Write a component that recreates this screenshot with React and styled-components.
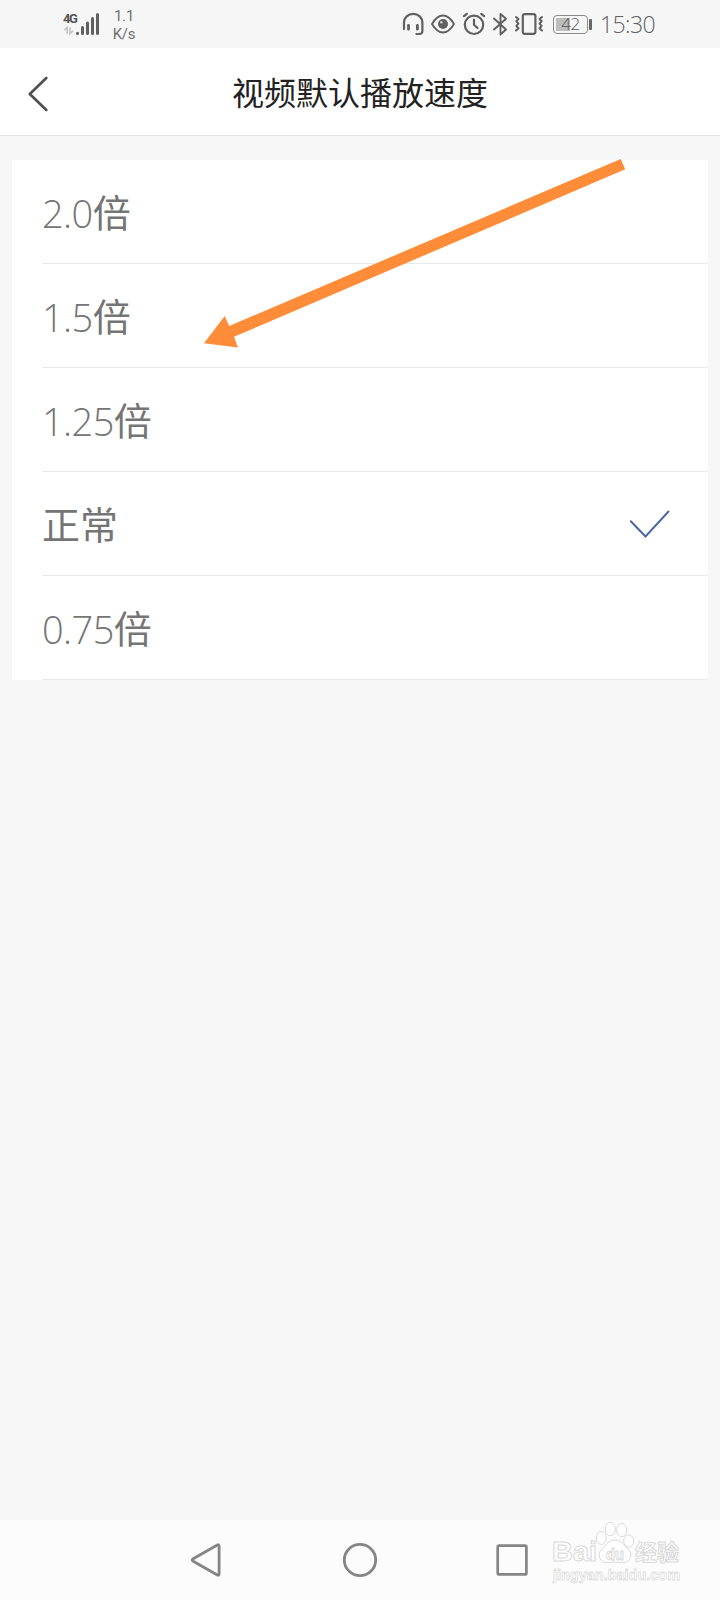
import React from "react";
import styled, { createGlobalStyle } from "styled-components";

const GlobalStyle = createGlobalStyle`
  * { box-sizing: border-box; }
  body { margin: 0; background: #f6f6f6; }
`;

const cjk = `"Noto Sans CJK SC", sans-serif`;

const Screen = styled.div`
  position: relative;
  width: 720px;
  height: 1600px;
  display: flex;
  flex-direction: column;
  background: #f7f7f7;
  overflow: hidden;
  font-family: "Open Sans", ${cjk};
`;

const StatusBar = styled.header`
  height: 48px;
  flex: none;
  display: flex;
  align-items: flex-start;
  padding: 0 65px 0 63px;
  background: #f6f6f6;
`;

const Drawing = styled.svg`
  display: block;
  flex: none;
  overflow: visible;
  margin-left: ${(p) => p.$gap || 0}px;
`;

const NetworkType = styled.div`
  width: 13px;
  padding-top: 11px;
  font: 700 13px/15px "Roboto", sans-serif;
  letter-spacing: -1.5px;
  color: #555;
`;

const NetSpeed = styled.div`
  width: 26px;
  margin-left: 11px;
  padding-top: 7px;
  text-align: center;
  font: 400 15px/18px "Roboto", sans-serif;
  letter-spacing: -0.2px;
  color: #707070;
`;

const StatusIcons = styled.div`
  margin-left: auto;
  display: flex;
`;

const Battery = styled.div`
  width: 35px;
  height: 19px;
  margin: 15px 0 0 10px;
  padding: 2px;
  border: 1.5px solid #8a8a8a;
  border-radius: 4px;
`;

const BatteryLevel = styled.div`
  height: 100%;
  background: linear-gradient(to right, #bdbdbd 48%, transparent 48%);
  font: 300 17px/12px "Open Sans", sans-serif;
  letter-spacing: -0.5px;
  text-align: center;
  color: #555;
`;

const BatteryKnob = styled.div`
  width: 3px;
  height: 11px;
  margin: 19px 0 0 1px;
  border-radius: 1px;
  background: #666;
`;

const Clock = styled.div`
  width: 55px;
  margin-left: 8px;
  font: 300 23px/49px "Open Sans", sans-serif;
  letter-spacing: -0.6px;
  white-space: nowrap;
  color: #606060;
`;

const TitleBar = styled.div`
  height: 88px;
  flex: none;
  display: grid;
  grid-template-columns: 76px 1fr 76px;
  align-items: center;
  background: #fff;
  border-bottom: 1px solid #e3e3e3;
`;

const BackButton = styled.button`
  padding: 4px 0 0 27px;
  border: 0;
  background: none;
`;

const Title = styled.h1`
  margin: 0;
  padding-bottom: 2px;
  text-align: center;
  font: 400 32px/48px ${cjk};
  color: #222;
`;

const SpeedList = styled.ul`
  margin: 24px 12px 0;
  padding: 0 0 0 30px;
  list-style: none;
  background: #fff;
`;

const SpeedRow = styled.li`
  height: 104px;
  display: flex;
  align-items: center;
  justify-content: space-between;
  padding-right: 37px;
  border-bottom: 1px solid #e8e8e8;
`;

const SpeedLabel = styled.span`
  display: flex;
  align-items: center;
  color: #757575;
`;

const Digits = styled.span`
  padding-top: 2px;
  font: 300 38px/56px "Open Sans", sans-serif;
  letter-spacing: -0.6px;
`;

const Unit = styled.span`
  font: 400 38px/54px ${cjk};
  padding-bottom: 2px;
`;

const Spacer = styled.div`
  flex: 1;
`;

const NavBar = styled.nav`
  height: 80px;
  flex: none;
  display: flex;
  align-items: center;
  padding-left: 190px;
  background: #fcfcfc;
`;

const Overlay = styled.svg`
  position: absolute;
  left: ${(p) => p.$left}px;
  top: ${(p) => p.$top}px;
  pointer-events: none;
`;

const speeds = [
  { digits: "2.0", unit: "倍" },
  { digits: "1.5", unit: "倍" },
  { digits: "1.25", unit: "倍" },
  { digits: "", unit: "正常", selected: true },
  { digits: "0.75", unit: "倍" },
];

function StatusIcon({ x, width, gap, children }) {
  return (
    <Drawing
      width={width}
      height="48"
      viewBox={`${x} 0 ${width} 48`}
      $gap={gap}
      fill="none"
      stroke="#606060"
      strokeWidth="2.2"
      strokeLinecap="round"
      strokeLinejoin="round"
    >
      {children}
    </Drawing>
  );
}

function Status() {
  return (
    <StatusBar>
      <NetworkType>
        4G
        <Drawing $gap={1} width="11" height="9" viewBox="0 0 12 9" fill="none" stroke="#c4c4c4" strokeWidth="1.8">
          <path d="M.5 4 3.5 1V8M6.5 1V8L10 4.5" />
        </Drawing>
      </NetworkType>
      <StatusIcon x={76} width={24}>
        <path strokeWidth="3" d="M77.5 33.3v.3M82.5 27.5v6M87.5 23v10.5M92.5 18.5v15M97.5 14.5v19" />
      </StatusIcon>
      <NetSpeed>1.1 K/s</NetSpeed>
      <StatusIcons>
        <StatusIcon x={402} width={22}>
          <path d="M404 29v-6.5a9.2 8.7 0 0 1 18.4 0V31q0 3-3 3h-3" />
          <path strokeWidth="2.8" d="M408.5 25.5v3.7M417.4 25.5v3.7" />
        </StatusIcon>
        <StatusIcon x={431} width={24} gap={7}>
          <path strokeWidth="1.9" d="M432 24q5-8.5 11-8.5T454 24q-5 8.5-11 8.5T432 24Z" />
          <circle cx="443" cy="24" r="5" fill="#606060" stroke="none" />
          <circle cx="441.3" cy="22.2" r="1.3" fill="#cfcfcf" stroke="none" />
        </StatusIcon>
        <StatusIcon x={463} width={22} gap={8}>
          <circle cx="474" cy="24.8" r="9.2" />
          <path d="M474 19.5v5.3l3.5 3.2M464 16.2l2.8-2.4M481.3 13.8l2.8 2.4" />
        </StatusIcon>
        <StatusIcon x={493} width={14} gap={8}>
          <path strokeWidth="1.9" d="m494 18.5 12 11-5.5 5V14l5.5 4.8L494 29.5" />
        </StatusIcon>
        <StatusIcon x={515} width={28} gap={8}>
          <rect x="522.8" y="14.2" width="12.6" height="19.6" rx="2" />
          <path strokeWidth="2" d="m516 17 2.5 2-2.2 2.3 2.2 2.3-2.2 2.3 2.2 2.3L516 30.5M542 17l-2.5 2 2.2 2.3-2.2 2.3 2.2 2.3-2.2 2.3 2.5 2.3" />
        </StatusIcon>
        <Battery>
          <BatteryLevel>42</BatteryLevel>
        </Battery>
        <BatteryKnob />
        <Clock>15:30</Clock>
      </StatusIcons>
    </StatusBar>
  );
}

function Watermark() {
  return (
    <Overlay $left={545} $top={1515} width="150" height="75" viewBox="545 1515 150 75" fill="#fff" stroke="#d9d9d9" strokeWidth="1">
      <g fontFamily='"Liberation Sans", sans-serif' fontWeight="700">
        <text x="552" y="1561" fontSize="28" textLength="45" lengthAdjust="spacingAndGlyphs">Bai</text>
        <path d="M615 1540c7 0 9 6 13 9 5 4 3 13-4 13.5-4 .3-6-.5-9-.5s-5 .8-9 .5c-7-.5-9-9.500-4-13.500 4-3 6-9 13-9Z" />
        <ellipse cx="601.300" cy="1538" rx="5" ry="6.500" />
        <ellipse cx="610.300" cy="1529" rx="5" ry="6.700" />
        <ellipse cx="621.700" cy="1530" rx="5" ry="6.700" />
        <ellipse cx="628.700" cy="1541" rx="5" ry="6.200" />
        <text x="606" y="1559.500" fontSize="17" textLength="18" lengthAdjust="spacingAndGlyphs">du</text>
        <text x="553" y="1580" fontSize="14.500" textLength="127" strokeWidth="0.800" stroke="#dedede" lengthAdjust="spacingAndGlyphs">jingyan.baidu.com</text>
      </g>
      <text x="635" y="1559.500" fontSize="22" fontWeight="700" fontFamily='"Noto Sans CJK SC", sans-serif'>经验</text>
    </Overlay>
  );
}

export default function App() {
  return (
    <Screen>
      <GlobalStyle />
      <Status />
      <TitleBar>
        <BackButton aria-label="返回">
          <Drawing width="23" height="36" viewBox="27 76 23 36" fill="none" stroke="#505050" strokeWidth="2.7" strokeLinecap="round" strokeLinejoin="round">
            <path d="M46.300 78 29.800 94l16.500 16" />
          </Drawing>
        </BackButton>
        <Title>视频默认播放速度</Title>
      </TitleBar>
      <SpeedList>
        {speeds.map((s) => (
          <SpeedRow key={s.digits + s.unit}>
            <SpeedLabel>
              {s.digits && <Digits>{s.digits}</Digits>}
              <Unit>{s.unit}</Unit>
            </SpeedLabel>
            {s.selected && (
              <Drawing width="42" height="30" viewBox="629 508.500 42 30" fill="none" stroke="#4b68a2" strokeWidth="2" strokeLinecap="round">
                <path d="m630.800 520.800 14.700 15.200 23-25" />
              </Drawing>
            )}
          </SpeedRow>
        ))}
      </SpeedList>
      <Spacer />
      <NavBar>
        <Drawing width="32" height="36" viewBox="190 1542 32 36" fill="none" stroke="#858585" strokeWidth="2.8" strokeLinejoin="round">
          <path d="M192.800 1559q-1 1 0 2l24.500 14q1.800.8 1.800-1v-28q0-1.800-1.800-1Z" />
        </Drawing>
        <Drawing $gap={120} width="36" height="36" viewBox="342 1542 36 36" fill="none" stroke="#858585" strokeWidth="2.800">
          <circle cx="360" cy="1560" r="15.700" />
        </Drawing>
        <Drawing $gap={116} width="36" height="36" viewBox="494 1542 36 36" fill="none" stroke="#858585" strokeWidth="2.700">
          <rect x="497.700" y="1545.700" width="28.700" height="28.700" rx="1.500" />
        </Drawing>
      </NavBar>
      <Overlay $left={200} $top={155} width="430" height="200" viewBox="200 155 430 200" fill="#ff8c38">
        <path d="m204 343.200 20.700-27.200 4.500 10 391.500-167 4.500 10.300L234 336.800l4 10.700Z" />
      </Overlay>
      <Watermark />
    </Screen>
  );
}
